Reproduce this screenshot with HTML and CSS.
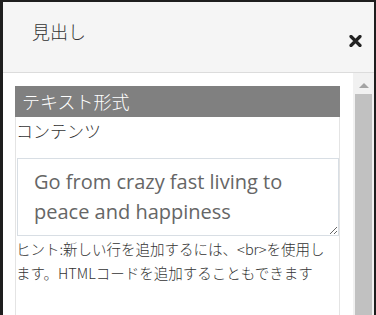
FILE: index.html
```html
<!DOCTYPE html>
<html lang="ja">
<head>
<meta charset="utf-8">
<link rel="stylesheet" href="styles.css">
</head>
<body>
<div class="modal">
  <div class="modal-header">
    <div class="modal-title">見出し</div>
    <button class="close" aria-label="close">
      <svg width="13" height="12" viewBox="0 0 13 12"><path d="M2 1.5 L11 10.5 M11 1.5 L2 10.5" stroke="#222" stroke-width="3.2" stroke-linecap="round"/></svg>
    </button>
  </div>
  <div class="modal-body">
    <div class="content">
      <div class="panel">
        <div class="panel-heading">テキスト形式</div>
        <div class="label">コンテンツ</div>
        <textarea class="field">Go from crazy fast living to peace and happiness</textarea>
        <div class="hint">ヒント:新しい行を追加するには、&lt;br&gt;を使用し<br>ます。HTMLコードを追加することもできます</div>
      </div>
    </div>
    <div class="scrollbar">
      <div class="arrow"></div>
      <div class="thumb"></div>
    </div>
  </div>
</div>
</body>
</html>
```
FILE: styles.css
```css
html, body {
  margin: 0;
  padding: 0;
  height: 100%;
  overflow: hidden;
}
body {
  background: #1e1e1e;
  font-family: "Noto Sans CJK JP", "Noto Sans", sans-serif;
  font-weight: 300;
  color: #333;
}
.modal {
  margin: 2px 2px 0 3px;
  height: calc(100% - 2px);
  background: #fff;
  display: flex;
  flex-direction: column;
  overflow: hidden;
}
.modal-header {
  flex: none;
  box-sizing: border-box;
  height: 71px;
  background: #f5f5f5;
  border-bottom: 1px solid #dcdcdc;
  display: flex;
  justify-content: space-between;
  align-items: flex-start;
}
.modal-title {
  font-size: 18px;
  line-height: 24px;
  padding: 17px 0 0 29px;
  color: #333;
}
.close {
  border: 0;
  background: none;
  padding: 0;
  margin: 33px 12px 0 0;
  width: 13px;
  height: 12px;
  display: block;
}
.close svg { display: block; }
.modal-body {
  flex: 1;
  display: flex;
  min-height: 0;
  overflow: hidden;
}
.content {
  flex: 1;
  padding: 13px 13px 0 12px;
  overflow: hidden;
}
.panel {
  border: 1px solid #e4e4e4;
  border-top: 0;
  border-bottom: 0;
  height: 100%;
  box-sizing: border-box;
}
.panel-heading {
  margin: 0 -1px;
  background: #808080;
  color: #fff;
  font-size: 18px;
  line-height: 31px;
  height: 31px;
  padding-left: 7px;
}
.label {
  font-size: 17px;
  line-height: 26px;
  margin-top: 1px;
  color: #333;
}
.field {
  display: block;
  box-sizing: border-box;
  width: 322px;
  height: 78px;
  margin: 14px 0 0 1px;
  padding: 8px 16px;
  border: 1px solid #d8dee4;
  border-radius: 0;
  font-family: "Open Sans", sans-serif;
  font-weight: 400;
  font-size: 20px;
  line-height: 30px;
  color: #666;
  overflow: hidden;
  resize: vertical;
  outline: none;
}
.hint {
  font-size: 14.5px;
  line-height: 24px;
  margin-top: 1px;
  color: #333;
  white-space: nowrap;
}
.scrollbar {
  flex: none;
  width: 21px;
  background: #f1f1f1;
  display: flex;
  flex-direction: column;
  align-items: center;
}
.arrow {
  margin-top: 10px;
  width: 0;
  height: 0;
  border-left: 5px solid transparent;
  border-right: 5px solid transparent;
  border-bottom: 5px solid #a3a3a3;
}
.thumb {
  margin-top: 6px;
  width: 17px;
  flex: 1;
  background: #c1c1c1;
}
```
